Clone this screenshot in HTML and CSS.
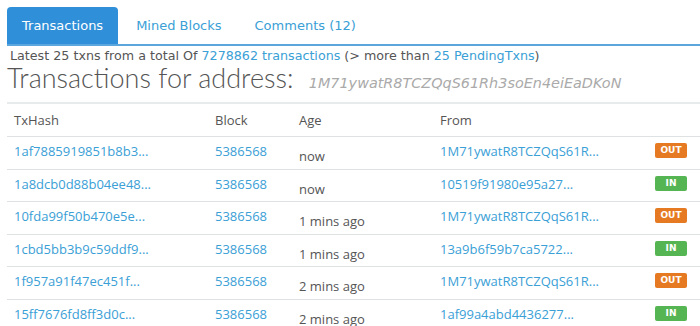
FILE: index.html
```html
<!DOCTYPE html>
<html lang="en">
<head>
    <meta charset="UTF-8">
    <meta name="viewport" content="width=device-width, initial-scale=1.0">
    <title>Address</title>
    <link rel="stylesheet" href="styles.css">
</head>
<body>
    <div class="page">
        <ul class="tabs">
            <li class="tab active">Transactions</li>
            <li class="tab">Mined Blocks</li>
            <li class="tab">Comments (12)</li>
        </ul>

        <p class="summary">Latest 25 txns from a total Of <a href="#">7278862 transactions</a> (&gt; more than <a href="#">25 PendingTxns</a>)</p>
        <h2 class="title">Transactions for address: <span class="address">1M71ywatR8TCZQqS61Rh3soEn4eiEaDKoN</span></h2>

        <table class="txs">
            <thead>
                <tr>
                    <th class="c-hash">TxHash</th>
                    <th class="c-block">Block</th>
                    <th class="c-age">Age</th>
                    <th class="c-from">From</th>
                    <th class="c-dir"></th>
                </tr>
            </thead>
            <tbody>
                <tr>
                    <td><a href="#">1af7885919851b8b3...</a></td>
                    <td><a href="#">5386568</a></td>
                    <td class="age">now</td>
                    <td><a href="#">1M71ywatR8TCZQqS61R...</a></td>
                    <td><span class="badge out">OUT</span></td>
                </tr>
                <tr>
                    <td><a href="#">1a8dcb0d88b04ee48...</a></td>
                    <td><a href="#">5386568</a></td>
                    <td class="age">now</td>
                    <td><a href="#">10519f91980e95a27...</a></td>
                    <td><span class="badge in">IN</span></td>
                </tr>
                <tr>
                    <td><a href="#">10fda99f50b470e5e...</a></td>
                    <td><a href="#">5386568</a></td>
                    <td class="age">1 mins ago</td>
                    <td><a href="#">1M71ywatR8TCZQqS61R...</a></td>
                    <td><span class="badge out">OUT</span></td>
                </tr>
                <tr>
                    <td><a href="#">1cbd5bb3b9c59ddf9...</a></td>
                    <td><a href="#">5386568</a></td>
                    <td class="age">1 mins ago</td>
                    <td><a href="#">13a9b6f59b7ca5722...</a></td>
                    <td><span class="badge in">IN</span></td>
                </tr>
                <tr>
                    <td><a href="#">1f957a91f47ec451f...</a></td>
                    <td><a href="#">5386568</a></td>
                    <td class="age">2 mins ago</td>
                    <td><a href="#">1M71ywatR8TCZQqS61R...</a></td>
                    <td><span class="badge out">OUT</span></td>
                </tr>
                <tr>
                    <td><a href="#">15ff7676fd8ff3d0c...</a></td>
                    <td><a href="#">5386568</a></td>
                    <td class="age">2 mins ago</td>
                    <td><a href="#">1af99a4abd4436277...</a></td>
                    <td><span class="badge in">IN</span></td>
                </tr>
            </tbody>
        </table>
    </div>
</body>
</html>
```

FILE: styles.css
```css
body {
    margin: 0;
    background-color: #fff;
    color: #555;
    font-family: "DejaVu Sans", sans-serif;
}

a {
    color: #3aa0d6;
    text-decoration: none;
}

.page {
    padding: 7px 0 0 7px;
}

.tabs {
    display: flex;
    list-style: none;
    margin: 0;
    padding: 0;
    border-bottom: 2px solid #5aa6dd;
}

.tab {
    height: 37px;
    line-height: 37px;
    padding: 0 15px;
    font-size: 13px;
    color: #3aa0d6;
}

.tab.active {
    background-color: #2f8fd8;
    border-radius: 4px 4px 0 0;
    color: #fff;
}

.tab + .tab {
    margin-left: 3px;
}

.summary {
    margin: 2px 0 0 3px;
    font-size: 12.7px;
    line-height: 16px;
}

.title {
    margin: 0;
    font-family: Lato, sans-serif;
    font-size: 27px;
    font-weight: 300;
    line-height: 28px;
    color: #555;
}

.address {
    margin-left: 8px;
    font-family: "DejaVu Sans", sans-serif;
    font-size: 14.4px;
    font-weight: 200;
    font-style: italic;
    color: #aaa;
}

.txs {
    width: 700px;
    margin-top: 5px;
    border-collapse: collapse;
    table-layout: fixed;
    border-top: 2px solid #e8ebeb;
    font-family: "Open Sans", sans-serif;
    font-size: 13px;
}

.txs th {
    height: 32px;
    padding: 0 7px;
    text-align: left;
    font-weight: normal;
    color: #555;
}

.txs td {
    height: 25.6px;
    padding: 6px 7px 0;
    border-top: 1px solid #dee2e2;
    line-height: 16px;
    vertical-align: top;
}

.txs td.age {
    height: 20.6px;
    padding-top: 11px;
}

.c-hash { width: 187px; }
.c-block { width: 70px; }
.c-age { width: 127px; }
.c-from { width: 197px; }

.badge {
    display: block;
    width: 32px;
    height: 15px;
    margin-left: 4px;
    line-height: 15px;
    border-radius: 2px;
    text-align: center;
    font-family: "DejaVu Sans", sans-serif;
    font-size: 9px;
    font-weight: bold;
    color: #fff;
}

.badge.out {
    background-color: #e67a22;
}

.badge.in {
    background-color: #56b553;
}
```
